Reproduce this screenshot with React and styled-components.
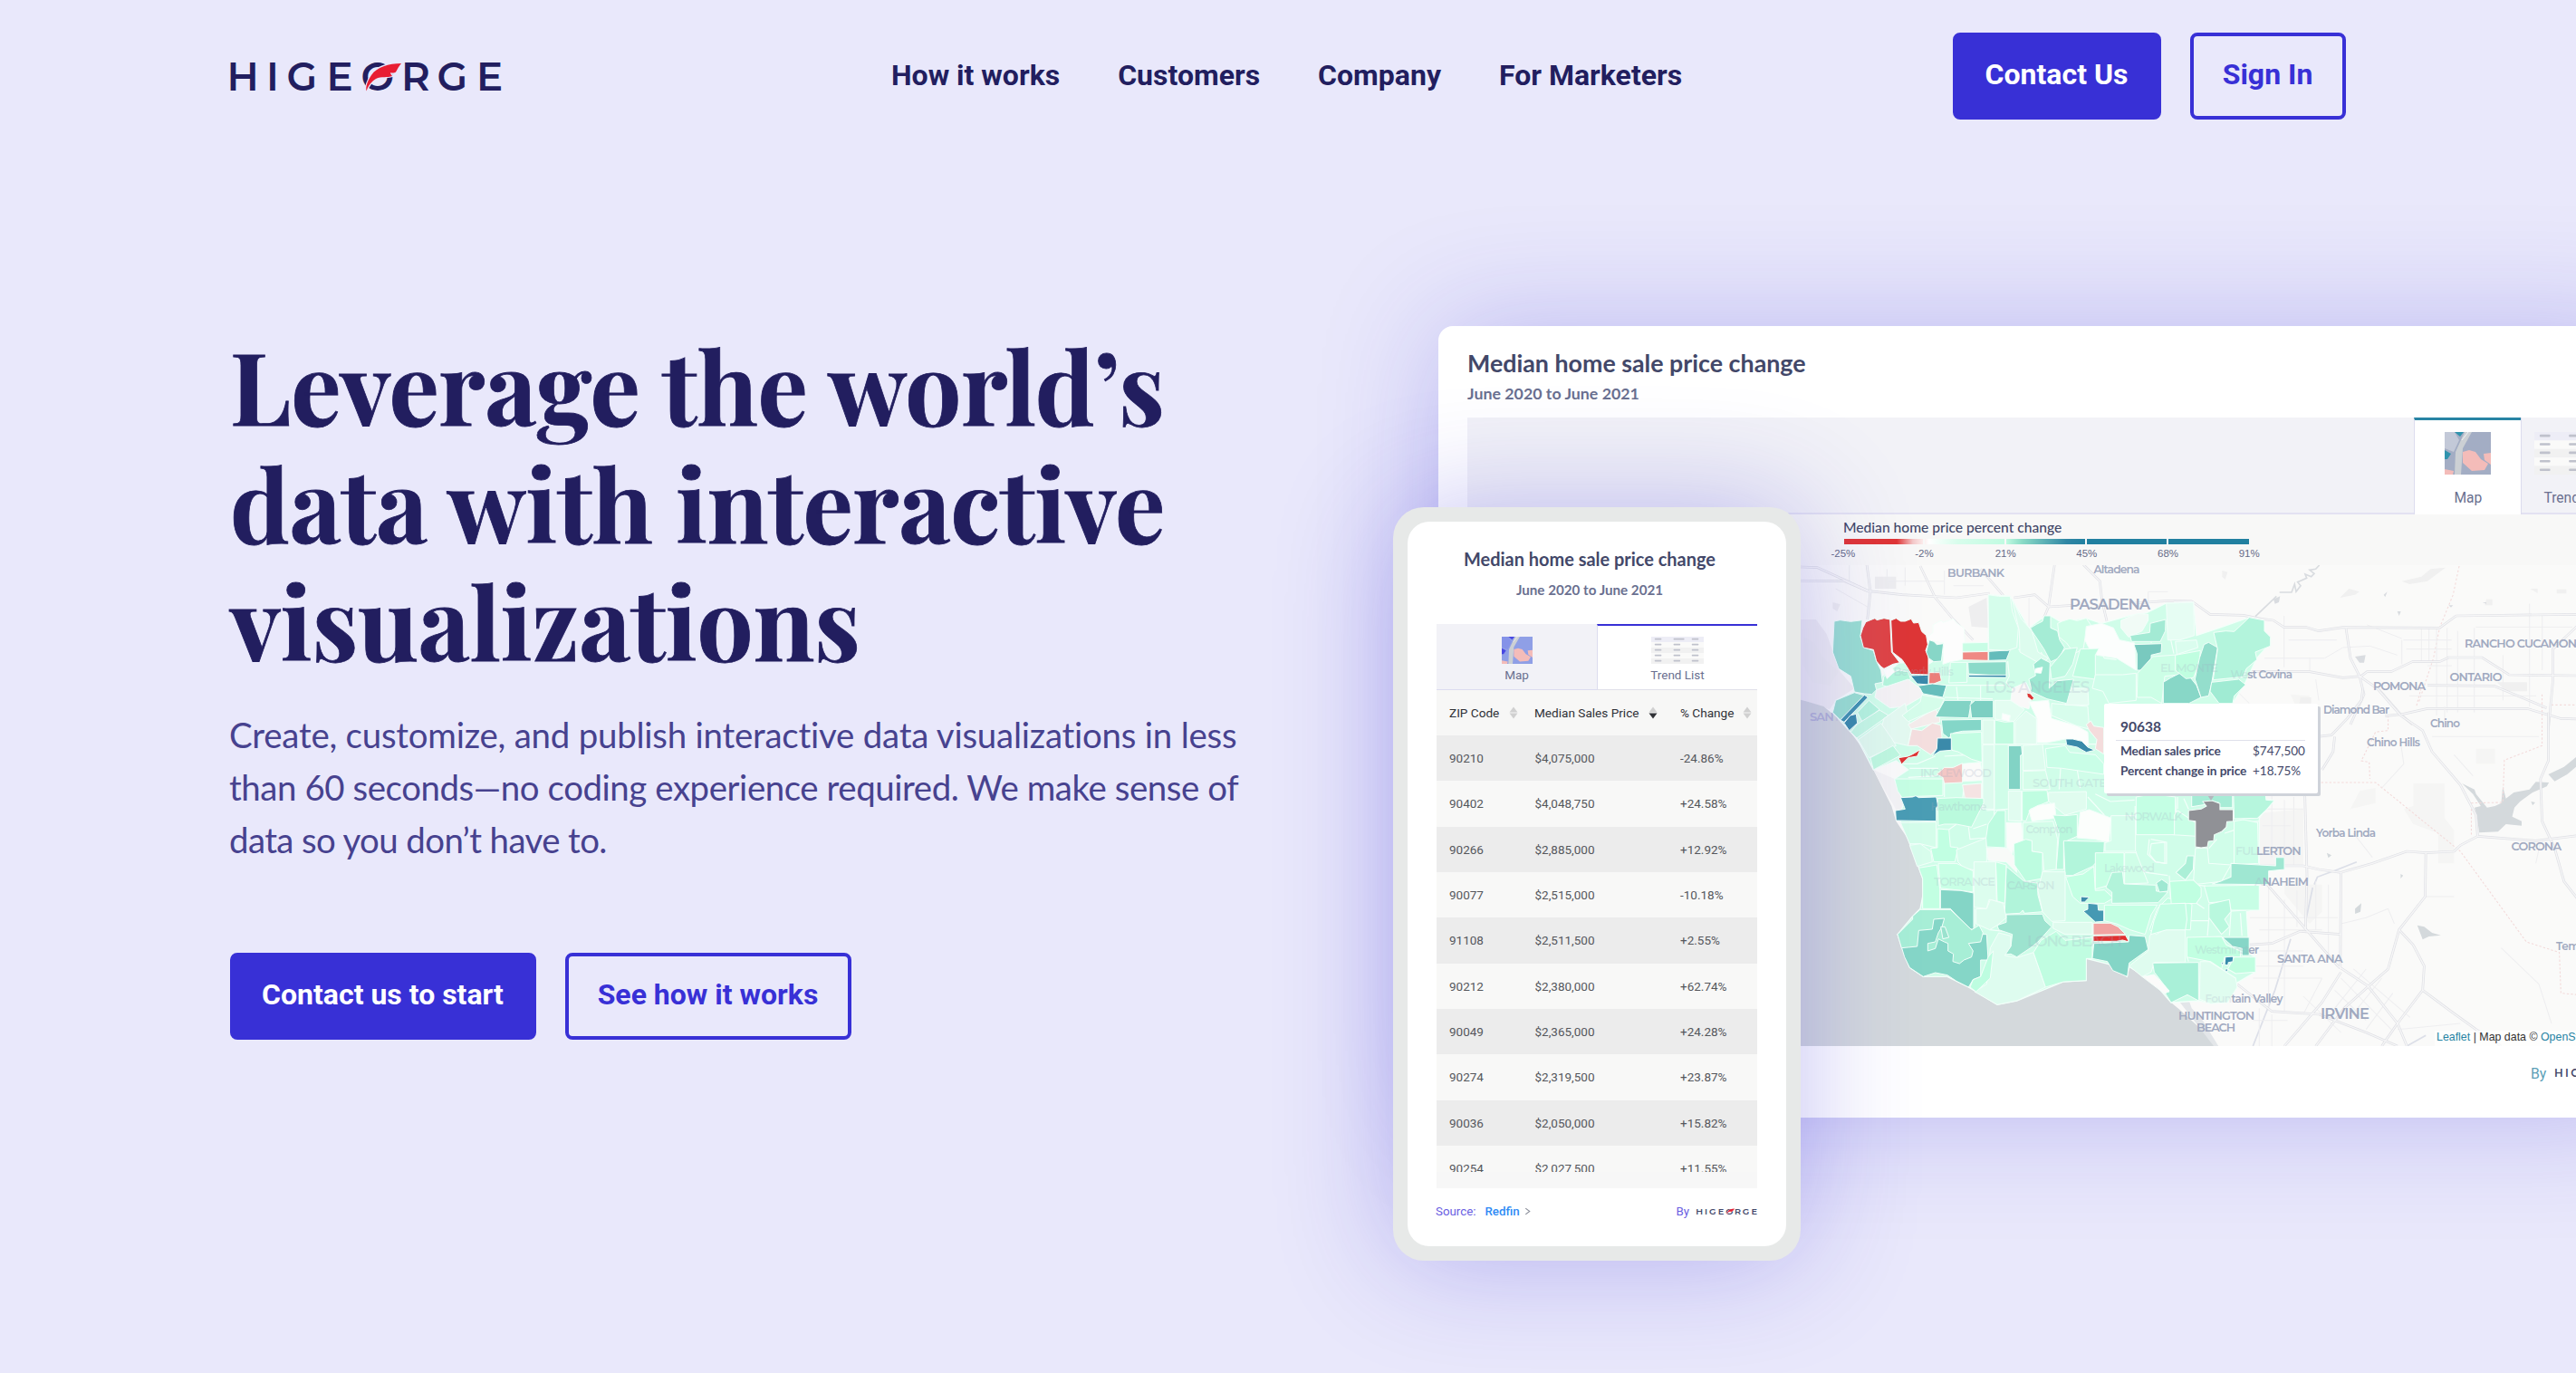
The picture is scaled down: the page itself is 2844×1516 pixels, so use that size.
import React from "react";
import styled, { createGlobalStyle, css } from "styled-components";

const GlobalStyle = createGlobalStyle`
  html, body { margin: 0; padding: 0; }
  body { background: #e9e8fb; overflow: hidden; }
  * { box-sizing: border-box; }
`;

const color = {
  navy: "#221e5f",
  indigo: "#3830d6",
  body: "#47428f",
  slate: "#434869",
  slateLight: "#6a7090",
  teal: "#2884a4",
};

const Page = styled.div`
  width: 100vw;
  height: 100vh;
  overflow: hidden;
  background: #e9e8fb;
  font-family: Roboto, "Liberation Sans", sans-serif;
`;

/* ---------- header ---------- */

const Header = styled.header`
  display: flex;
  align-items: center;
  height: 168px;
  padding: 0 254px;
`;

const Nav = styled.nav`
  display: flex;
  gap: 64px;
  margin: 0 0 2px 429px;
`;

const NavLink = styled.a`
  color: ${color.navy};
  font-size: 32px;
  font-weight: 700;
  line-height: 38px;
  white-space: nowrap;
`;

const ButtonRow = styled.div`
  display: flex;
  gap: 32px;
`;

const Actions = styled(ButtonRow)`
  margin-left: auto;
`;

const Button = styled.button`
  width: ${(p) => p.$width}px;
  height: 96px;
  padding: 0 1px 4px 0;
  border: 4px solid ${color.indigo};
  border-radius: 8px;
  background: ${(p) => (p.$solid ? color.indigo : "transparent")};
  color: ${(p) => (p.$solid ? "#fff" : color.indigo)};
  font-family: Roboto, "Liberation Sans", sans-serif;
  font-size: 32px;
  font-weight: 700;
  white-space: nowrap;
`;

/* ---------- hero ---------- */

const Hero = styled.main`
  display: flex;
  align-items: flex-start;
  padding-left: 254px;
`;

const Copy = styled.section`
  flex: 0 0 1334px;
  padding-top: 192px;
`;

const Title = styled.h1`
  margin: 0;
  color: ${color.navy};
  font-family: "Playfair Display", "Liberation Serif", serif;
  font-size: 110px;
  font-weight: 700;
  line-height: 130px;
  -webkit-text-stroke: 0.8px ${color.navy};
`;

const TitleLine = styled.span`
  display: block;
  white-space: nowrap;
  letter-spacing: ${(p) => p.$track}px;
`;

const Lead = styled.p`
  width: 1130px;
  margin: 32px 0 96px -1px;
  color: ${color.body};
  font-family: Lato, sans-serif;
  font-size: 38.4px;
  font-variant-ligatures: none;
  line-height: 58px;
`;

const LeadLine = styled.span`
  display: block;
  letter-spacing: ${(p) => p.$track}px;
  white-space: nowrap;
`;

const Showcase = styled.section`
  position: relative;
  flex: 0 0 1344px;
  margin-top: 192px;
`;

const glow = css`
  box-shadow: 0 0 128px rgba(57, 48, 216, ${(p) => p.$glow});
`;

/* ---------- desktop card ---------- */

const Card = styled.article`
  ${glow}
  height: 874px;
  padding: 0 32px;
  border-radius: 16px;
  background: #fff;
`;

const CardHead = styled.header`
  height: 101px;
  padding-top: 24px;
  font-family: Lato, sans-serif;
  font-weight: 700;
`;

const CardTitle = styled.h2`
  margin: 0;
  color: ${color.slate};
  font-size: 26.8px;
  line-height: 34px;
`;

const CardSubtitle = styled.p`
  margin: 2px 0 0;
  color: ${color.slateLight};
  font-size: 17.8px;
  line-height: 28px;
`;

const TabBar = styled.div`
  display: flex;
  justify-content: flex-end;
  height: 107px;
  padding-right: 3px;
  border-bottom: 2px solid #e3e2f2;
  background: #f2f2f7;
`;

const Tab = styled.div`
  display: flex;
  flex-direction: column;
  align-items: center;
  gap: 16px;
  width: 118px;
  height: 107px;
  padding-top: ${(p) => (p.$active ? 13 : 16)}px;
  border-top: ${(p) => (p.$active ? `3px solid ${color.teal}` : "0")};
  border-left: 1px solid #dcdcee;
  background: ${(p) => (p.$active ? "#fff" : "transparent")};
  color: ${color.slateLight};
  font-size: 15.6px;
  line-height: 20px;
`;

const Legend = styled.div`
  height: 56px;
  padding: 4px 0 0 415px;
  background: #f8f8f7;
`;

const LegendTitle = styled.div`
  color: ${color.slate};
  font-family: Lato, sans-serif;
  font-size: 15.6px;
  font-weight: 500;
  line-height: 20px;
`;

const LegendBar = styled.div`
  display: grid;
  grid-template-columns: repeat(5, 1fr);
  width: 447px;
  height: 6px;
  margin: 3px 0 0 1px;
  background: linear-gradient(90deg, #e03535 0 13%, #f4c9c9 17%, #fff 21%, #d8fdec 28%, #c0fbe1 40%, #8adbc6 44%, #2f86a4 55%, #2180a0 60%);
`;

const LegendStep = styled.i`
  border-right: ${(p) => (p.$last ? 0 : 2)}px solid #f8f8f7;
`;

const LegendScale = styled.div`
  display: flex;
  width: 538px;
  margin: 4px 0 0 -45px;
`;

const LegendMark = styled.span`
  flex: 1;
  color: #666b87;
  font-family: "Liberation Sans", sans-serif;
  font-size: 11.5px;
  line-height: 13px;
  text-align: center;
`;

const MapFrame = styled.div`
  position: relative;
  height: 531px;
  svg { display: block; }
`;

const Tooltip = styled.div`
  position: absolute;
  left: 703px;
  top: 153px;
  width: 236px;
  height: 99px;
  padding: 15px 14px 0 13px;
  border-radius: 2px;
  background: #fff;
  box-shadow: 3px 3px 0 #cfd3da;
  color: ${color.slate};
  font-family: Lato, sans-serif;
`;

const TooltipTitle = styled.div`
  height: 26px;
  padding-left: 5px;
  border-bottom: 1px solid #dfe0ea;
  font-size: 15.5px;
  font-weight: 700;
  line-height: 20px;
`;

const TooltipRow = styled.div`
  display: grid;
  grid-template-columns: 146px 1fr;
  padding-left: 5px;
  font-size: 13.5px;
  line-height: 22px;
  white-space: nowrap;
`;

const TooltipKey = styled.span`
  font-weight: 700;
  font-size: 13.7px;
  letter-spacing: -0.1px;
`;

const Attribution = styled.div`
  position: absolute;
  left: 1068px;
  bottom: 0;
  padding: 0 2px 2px;
  background: rgba(255, 255, 255, 0.7);
  color: #333;
  font-family: "Liberation Sans", sans-serif;
  font-size: 12.4px;
  line-height: 15px;
  white-space: nowrap;
`;

const MapLink = styled.a`
  color: ${color.teal};
`;

const CardFoot = styled.footer`
  display: flex;
  align-items: center;
  gap: 10px;
  height: 58px;
  padding: 2px 0 0 1174px;
  color: #5c9fb8;
  font-size: 15.8px;
`;

/* ---------- phone ---------- */

const Phone = styled.article`
  ${glow}
  position: absolute;
  left: -50px;
  top: 200px;
  width: 450px;
  height: 832px;
  padding: 16px;
  border-radius: 34px;
  background: #e7e9e8;
`;

const Screen = styled.div`
  height: 800px;
  padding: 27px 32px 0;
  border-radius: 24px;
  background: #fff;
  font-family: Roboto, sans-serif;
`;

const PhoneTitle = styled.h3`
  margin: 0 16px 0 0;
  color: ${color.slate};
  font-family: Lato, sans-serif;
  font-size: 19.95px;
  line-height: 28px;
  text-align: center;
  white-space: nowrap;
`;

const PhoneSubtitle = styled.p`
  margin: 8px 16px 26px 0;
  color: ${color.slateLight};
  font-family: Lato, sans-serif;
  font-size: 15.2px;
  font-weight: 700;
  line-height: 24px;
  text-align: center;
`;

const PhoneTabs = styled.div`
  display: grid;
  grid-template-columns: 1fr 1fr;
  height: 73px;
`;

const PhoneTab = styled.div`
  display: flex;
  flex-direction: column;
  align-items: center;
  gap: 3px;
  padding-top: ${(p) => (p.$active ? 12 : 14)}px;
  border-top: ${(p) => (p.$active ? `2px solid ${color.indigo}` : "0")};
  border-bottom: 1px solid ${(p) => (p.$active ? "#e0e0ea" : "#dcdcf0")};
  border-left: ${(p) => (p.$active ? "1px solid #dcdcee" : "0")};
  background: ${(p) => (p.$active ? "#fff" : "#f2f2f7")};
  color: ${color.slateLight};
  font-size: 13.5px;
  line-height: 18px;
`;

const Table = styled.div`
  height: 550px;
  background: #f7f7f7;
`;

const TableHead = styled.div`
  display: grid;
  grid-template-columns: 94px 161px 1fr;
  align-items: center;
  height: 50px;
  padding-left: 14px;
  background: #f7f7f6;
  color: #2f3136;
  font-size: 13.6px;
  white-space: nowrap;
`;

const HeadCell = styled.span`
  display: flex;
  align-items: center;
  justify-content: space-between;
  padding-right: ${(p) => p.$pad}px;
`;

const Rows = styled.div`
  height: 482px;
  overflow: hidden;
`;

const Row = styled.div`
  display: grid;
  grid-template-columns: 94.5px 160.5px 1fr;
  height: 50.35px;
  padding-left: 14px;
  background: ${(p) => (p.$shade ? "#ececec" : "#f8f8f7")};
  color: #55575c;
  font-size: 13.5px;
  line-height: 50px;
`;

const PhoneFoot = styled.footer`
  display: flex;
  align-items: center;
  height: 51px;
  margin-left: -1px;
  color: #6a60e2;
  font-size: 13.3px;
`;

const SourceLink = styled.a`
  margin: 0 5px 0 10px;
  color: #2f8bf5;
  font-weight: 500;
`;

const Byline = styled.span`
  display: flex;
  align-items: center;
  gap: 8px;
  margin-left: auto;
`;

/* ---------- drawings ---------- */

const Mark = styled.svg`
  flex: none;
  overflow: visible;
`;

const Wordmark = styled.text`
  font-family: Montserrat, Lato, sans-serif;
  font-size: 43.5px;
  font-weight: 600;
`;

function Logo({ width, height, back = "#e9e8fb", ink = color.navy }) {
  return (
    <Mark width={width} height={height} viewBox="253 66 301 35" preserveAspectRatio="none">
      <Wordmark x="249.500 293 315.500 359.500 397.500 442 481.500 525" y="98.6" fill={ink}>
        HIGEORGE
      </Wordmark>
      <path
        d="M442 69 C428 69 415 73 409 82 C405 88 402.500 94 403.500 99.500 C406 93 409 89 414 86 C420 83 427 85 432 83 C431 81.500 430 80.500 430 79.200 C432 79.800 434.500 79.800 436 78.500 C438 75 439.500 72 442 69Z"
        fill="#e81e33"
        stroke={back}
        strokeWidth="2.400"
        paintOrder="stroke"
      />
    </Mark>
  );
}

function MapThumb({ width, height, blue }) {
  const field = blue ? "#8f9fe6" : "#a3adc4";
  const accent = blue ? "#4747e2" : "#2f93ad";
  return (
    <svg width={width} height={height} viewBox="0 0 51 47" preserveAspectRatio="none">
      <rect width="51" height="47" fill={field} />
      <path d="M0 0H11L16 9 10 22 0 18Z" fill={blue ? "#8492e8" : "#c3c9d8"} />
      <path d="M11 0H21L17 5Z M0 20L7 24 3 30 0 30Z" fill={accent} />
      <path d="M22 0H30L20 18 18 47H11L12 22Z" fill="#ccd0d4" />
      <path d="M26 0L19 9" stroke="#f2f2f2" />
      <path d="M20 22L27 20 34 22 40 30 48 35 44 42 30 43 20 34Z M43 24L51 23V36L44 31Z M0 41L10 43 9 47H0Z" fill="#f4bcb9" />
    </svg>
  );
}

function ListThumb({ width, height }) {
  const rows = [0, 1, 2, 3, 4];
  return (
    <svg width={width} height={height} viewBox="0 0 92 47" preserveAspectRatio="none">
      {rows.map((r) => (
        <g key={r}>
          <rect y={r * 9.4} width="92" height="9.400" fill={r === 0 ? "#ededf6" : r % 2 ? "#fafaf9" : "#f1f1f1"} />
          {[6, 39, 71].map((x) => (
            <rect key={x} x={x} y={r * 9.4 + 2.8} width={r === 0 && x === 39 ? 19 : 12} height="2.600" rx="1" fill="#bfc1cc" />
          ))}
        </g>
      ))}
    </svg>
  );
}

function SortIcon({ active }) {
  return (
    <svg width="10" height="14" viewBox="0 0 10 14">
      <path d="M5 0.500L9.500 6.500H0.500Z" fill="#d0d0d0" />
      <path d="M5 13.500L0.500 7.500H9.500Z" fill={active ? "#303236" : "#d0d0d0"} />
    </svg>
  );
}

const REGION =
  "M360,555 L410,515 507,520 620,450 705,448 708,290 778,295 840,400 880,370 912,360 945,380 1030,368 1080,385 1170,360 1230,350 1295,318 1385,315 1395,425 1470,400 1570,365 1640,450 1595,500 1555,585 1515,650 1540,960 1644,970 1603,1030 1603,1330 1561,1340 1570,1480 1590,1490 1590,1540 1530,1575 1499,1640 1441,1645 1405,1635 1311,1641 1250,1570 1172,1522 1165,1555 1110,1515 1030,1495 1030,1568 955,1572 800,1635 735,1648 640,1590 570,1555 490,1555 445,1525 420,1460 405,1415 455,1355 480,1330 490,1280 488,1230 470,1180 440,1100 410,1030 425,980 395,900 440,870 400,840 325,870 270,765 245,740 190,680 200,640 260,612Z";

const NORTH = [
  ["#9be0d1", "195,378 215,374 250,379 288,374 282,430 295,465 325,475 335,510 350,540 355,580 330,585 335,605 320,620 295,618 262,612 250,560 210,535 190,480"],
  ["#fdfdfd", "505,430 522,415 522,390 550,375 555,382 590,370 600,384 625,400 628,445 618,505 580,512 555,520 558,450 505,440"],
  ["#e04545", "300,380 330,368 336,374 360,368 380,372 385,480 412,515 390,520 360,535 350,528 335,510 325,472 292,465 282,425 290,400"],
  ["#de3636", "383,375 400,368 415,378 430,378 450,370 458,384 475,382 485,412 500,425 505,455 498,475 507,490 507,555 450,553 437,530 420,505 388,480"],
  ["#87d6c7", "510,440 525,445 535,455 557,452 550,510 525,512 508,500 500,480"],
  ["#c8fde5", "620,450 705,448 705,478 620,478"],
  ["#ef8984", "620,480 705,478 705,508 620,506"],
  ["#64bcbb", "707,478 778,473 765,506 707,508"],
  ["#8bdac9", "638,514 765,512 765,560 640,552"],
  ["#2f84a6", "640,556 765,556 765,564 640,563"],
  ["#c9fde6", "580,514 635,514 635,580 575,582"],
  ["#d5fdeb", "705,290 740,295 778,295 785,345 805,400 800,465 770,475 707,472"],
  ["#ddfcee", "783,300 815,370 850,410 870,480 905,500 880,520 810,480 808,410"],
  ["#a5ecd5", "845,400 865,388 885,378 890,360 912,360 912,400 935,410 942,440 958,465 940,500 912,512 890,470 850,410"],
  ["#d0fee8", "935,385 950,378 975,370 1000,376 1030,368 1048,395 1025,440 1020,470 990,485 965,450 940,430"],
  ["#fcfefd", "1030,395 1080,385 1120,400 1140,440 1190,450 1195,540 1130,500 1065,490 1040,468 1025,440"],
  ["#f1fbf6", "1145,375 1200,352 1235,355 1235,375 1215,410 1170,430 1145,400"],
  ["#c0fce1", "1010,470 1072,468 1060,490 1060,570 985,560"],
  ["#bdf8e0", "960,470 1000,465 985,520 960,560 915,570 910,530 935,500"],
  ["#a3ead4", "1175,425 1240,415 1242,385 1293,372 1292,410 1275,445 1180,445"],
  ["#79c9bf", "1188,455 1280,452 1278,482 1245,490 1245,540 1198,540 1198,485"],
  ["#e6fdf3", "1295,318 1385,315 1388,425 1340,440 1300,440"],
  ["#ccfee6", "1200,550 1250,495 1385,485 1385,550 1290,560 1280,650 1245,630 1198,630"],
  ["#d0fdea", "1060,555 1150,555 1195,550 1195,640 1105,650 1085,610 1050,600"],
  ["#b5f7dc", "360,560 410,540 440,545 448,568 405,605 355,590"],
  ["#fdfdfd", "358,540 385,530 395,545 370,568"],
  ["#3a89aa", "448,558 507,556 507,588 470,585"],
  ["#ec7f7b", "510,548 545,548 550,575 525,585 508,585"],
  ["#66bebc", "472,592 520,585 567,590 555,630 490,618"],
  ["#f5f3f4", "335,605 440,570 480,600 490,625 430,660 380,665 330,630"],
  ["#9be0d0", "195,660 200,640 262,614 300,625 215,705 190,680"],
  ["#4394b0", "215,705 295,622 307,630 228,712"],
  ["#3c8cab", "228,715 248,690 268,685 272,715 245,740"],
  ["#b5f4dd", "272,680 310,640 345,670 290,715"],
  ["#c5f8e3", "250,745 270,720 345,672 375,690 270,765"],
  ["#e4faf0", "350,735 360,700 430,650 445,715 450,735 440,790 395,780"],
  ["#dff9ed", "275,770 350,715 385,765 400,790 310,830"],
  ["#bff8df", "315,830 390,790 415,822 325,870"],
  ["#f4eceb", "440,720 500,685 530,665 545,700 545,712 450,735"],
  ["#d5fdea", "420,690 480,645 485,622 560,635 545,665 440,710"],
  ["#f4dede", "440,790 452,735 485,740 520,715 548,722 552,760 535,800 515,820 470,790"],
  ["#82d3c5", "530,695 560,640 650,640 640,698"],
  ["#7ccfc2", "645,655 662,640 722,640 722,698 650,698"],
  ["#84d6c8", "550,705 683,703 683,740 620,742 590,748 575,765 555,750"],
  ["#c3fde3", "580,750 683,745 685,845 650,835 605,810 585,805"],
  ["#3b8aaa", "537,765 583,765 583,805 545,808 520,824 535,800"],
  ["#de3535", "408,830 440,825 455,818 480,803 470,825 440,830 418,852"],
  ["#f3c7c5", "535,885 560,862 590,862 620,848 620,912 560,915 555,895"],
  ["#fbfbfa", "622,850 680,845 685,905 622,908"],
  ["#f5e3e3", "620,920 683,915 683,970 630,975"],
  ["#dffbee", "687,705 725,705 725,785 687,785"],
  ["#c0fbe0", "727,705 760,712 790,710 790,785 727,785"],
  ["#e3fdf1", "727,640 780,640 825,670 790,710 727,702"],
  ["#fdfdfd", "752,683 778,690 775,710 750,703"],
  ["#e1fcf0", "795,710 830,675 865,700 865,785 795,785"],
  ["#f9f8f8", "780,640 785,600 830,580 850,620 840,668 810,660"],
  ["#fdfefd", "840,645 905,640 915,700 1000,725 1035,745 1038,790 960,768 900,780 867,780 867,700"],
  ["#d7fdec", "915,650 1035,660 1040,735 1000,725 915,690"],
  ["#e5fcf2", "965,600 1035,600 1038,655 960,655"],
  ["#9ce7d1", "855,520 880,500 910,515 907,600 935,575 988,570 965,650 900,635 845,610 848,600 840,570 862,558"],
  ["#fdfefd", "862,535 885,530 880,550 860,548"],
  ["#dc3434", "833,615 845,618 857,632 850,640 835,628"],
  ["#82d3c5", "772,790 815,790 818,820 812,822 812,935 772,935"],
  ["#ddfbee", "687,787 725,787 725,1000 687,1000"],
  ["#ddfcee", "820,790 885,785 895,870 820,872"],
  ["#d5fdea", "820,875 895,872 910,935 820,935"],
  ["#c9fee7", "895,800 960,790 975,812 1060,820 1088,850 1088,885 950,865 900,862"],
  ["#f4dcdc", "1030,720 1045,708 1055,725 1088,730 1088,818 1060,800 1065,770 1040,740"],
  ["#3a8aaa", "962,768 985,768 1015,775 1035,795 1058,805 1030,812 1000,795 965,788"],
  ["#88d7c7", "1285,580 1310,565 1340,550 1365,552 1395,590 1410,630 1370,650 1285,650"],
];

const SOUTH = [
  ["#c6ffe3", "395,0 555,0 555,55 470,58 420,62 405,40"],
  ["#4a9db4", "415,62 455,60 465,56 475,62 533,60 540,90 533,95 533,140 400,138 398,105 430,100"],
  ["#bafadd", "537,65 600,62 690,65 690,80 650,160 600,150 560,150 540,155"],
  ["#d4fdea", "415,145 533,143 533,228 480,215 445,215"],
  ["#c1ffe2", "515,230 537,228 537,165 575,168 580,225 605,228 595,275 525,275"],
  ["#d8fdec", "445,220 480,215 515,240 520,275 470,290"],
  ["#d7fdec", "600,235 700,195 700,275 658,302 625,295 605,275"],
  ["#bdfbe0", "698,195 705,150 735,105 762,105 762,228 700,225"],
  ["#fbfcfb", "765,145 815,145 820,205 790,215 785,250 768,250"],
  ["#f8faf8", "700,230 770,230 795,265 800,310 765,275 705,270"],
  ["#e1fcf0", "772,40 815,40 815,140 772,138"],
  ["#c0fde1", "818,40 900,38 905,75 845,100 830,140 818,138"],
  ["#e0fcef", "905,45 1030,42 1030,100 960,120 905,75"],
  ["#fcfefc", "840,105 870,88 925,80 930,130 850,140"],
  ["#b9f8dd", "920,120 960,122 1000,118 1000,190 955,210 955,300 930,300 940,180"],
  ["#d3fde9", "820,145 920,140 935,200 930,300 890,305 885,245 850,240 850,205 820,205"],
  ["#fcfefc", "1010,110 1040,102 1112,130 1105,210 1060,200 1000,195"],
  ["#d6fdec", "1112,122 1193,122 1193,240 1092,240 1092,212 1112,205"],
  ["#c4ffe4", "1195,60 1250,50 1325,60 1325,185 1195,185"],
  ["#bdfce0", "790,215 830,200 850,205 850,240 885,245 885,330 830,340 792,285"],
  ["#b2f5db", "955,205 1090,208 1088,250 1050,290 985,320 960,320"],
  ["#b1f4da", "765,290 825,340 868,345 870,385 885,440 825,445 820,435 810,445 760,448"],
  ["#c2ffe2", "730,275 765,285 760,412 735,405"],
  ["#dcfdee", "658,275 730,275 733,405 708,400 700,430 658,425"],
  ["#c8ffe5", "540,280 600,280 655,305 655,375 547,362"],
  ["#84d5c6", "547,367 615,370 657,378 657,500 640,495 580,430 547,430"],
  ["#c2ffe2", "475,295 535,285 545,365 545,430 488,430 488,330"],
  ["#85d6c7", "405,515 425,495 455,465 455,455 480,433 580,433 650,500 685,515 700,515 705,600 680,600 680,655 655,665 640,690 600,670 570,650 530,642 490,655 445,625 428,590"],
  ["#a7eed6", "405,515 425,495 455,465 455,455 480,433 580,433 650,500 675,485 688,510 680,540 640,545 655,570 650,590 625,600 610,612 588,605 590,580 572,570 572,545 560,540 540,530 530,562 505,570 505,545 530,540 540,510 552,490 560,462 525,465 520,498 475,502 470,555 418,560"],
  ["#9ae2ce", "548,490 562,490 575,525 555,530"],
  ["#9de3cf", "735,485 765,475 765,450 885,448 893,470 915,490 870,540 845,560 800,590 780,580 755,582 780,555 785,515 740,500"],
  ["#defcef", "712,560 740,510 780,520 780,555 760,585 800,592 855,575 895,690 800,735 735,748 660,705 700,680"],
  ["#bdfde0", "705,590 722,570 712,660 665,705 645,690 655,665 680,655"],
  ["#ddfcee", "665,430 700,430 712,400 755,412 765,460 735,485 710,500 665,480"],
  ["#dcfbed", "885,308 960,308 960,470 915,472 885,440 870,370"],
  ["#c0fde1", "855,575 880,535 930,505 960,535 1050,525 1050,595 1030,595 1030,668 955,672 895,690"],
  ["#dffbee", "920,475 1050,475 1050,515 960,515 920,495"],
  ["#c3ffe3", "962,325 1020,315 1055,290 1060,370 1090,368 1120,395 1090,412 1010,412 985,390"],
  ["#c6ffe4", "1060,245 1155,245 1155,345 1095,355 1060,365"],
  ["#d0fee8", "1157,245 1195,245 1235,345 1157,348"],
  ["#b2f3da", "1115,310 1150,308 1155,348 1260,352 1262,372 1300,375 1268,410 1115,412 1115,375 1095,360"],
  ["#9fe8d2", "1262,345 1280,333 1302,348 1300,372 1272,375"],
  ["#c3ffe3", "1090,418 1265,418 1245,450 1225,515 1175,500 1130,480 1090,470"],
  ["#3c8cab", "1012,390 1040,392 1025,408 1012,408"],
  ["#4599b3", "1020,438 1035,432 1035,412 1068,415 1070,435 1088,435 1088,472 1060,474"],
  ["#f1a3a1", "1053,478 1110,478 1135,490 1160,515 1053,517"],
  ["#e03030", "1053,520 1160,518 1172,540 1150,534 1130,538 1053,538"],
  ["#84d5c6", "1055,545 1170,540 1172,518 1225,522 1235,565 1172,610 1166,655 1118,635 1100,605 1050,595"],
  ["#dffcef", "1240,520 1260,495 1358,500 1358,608 1255,608 1245,640 1215,655 1172,620 1235,570"],
  ["#c2fde2", "1265,430 1300,395 1380,415 1375,500 1290,498 1262,515 1240,500"],
  ["#a9f0d8", "1250,610 1402,608 1402,735 1365,715 1311,741 1290,708 1305,705 1255,640"],
  ["#fbfbfa", "1215,655 1255,648 1305,702 1290,712"],
];

const NORTHEAST = [
  ["#c0fee0", "5,1150 88,1135 85,1175 65,1225 40,1228 5,1200"],
  ["#dafdee", "5,1105 75,1100 80,1125 10,1148"],
  ["#94decc", "85,1160 100,1115 115,1108 145,1125 125,1245 115,1285 90,1290 70,1230"],
  ["#b3f4dc", "132,1075 172,1070 200,1072 250,1025 300,1035 300,1070 320,1090 320,1120 270,1140 275,1165 240,1195 230,1222 130,1232 145,1130"],
  ["#a0ebd3", "125,1240 215,1230 238,1248 200,1285 195,1310 150,1310 120,1270"],
];

const SOUTHEAST = [
  ["#a6ecd6", "345,350 475,350 475,395 435,395 430,378 345,392"],
  ["#b6f6dd", "478,350 580,350 582,370 608,372 585,400 555,430 480,432"],
  ["#ccfee8", "480,440 510,435 555,445 558,580 480,585"],
  ["#c9fee6", "300,405 357,445 357,490 290,485 290,420"],
  ["#d3fdea", "357,530 395,528 400,580 470,585 440,640 350,650"],
  ["#abefd7", "295,610 325,580 330,555 352,555 350,600 325,635"],
  ["#9fe7d2", "470,580 612,588 612,560 640,560 640,600 590,605 590,650 410,648 440,638 470,625"],
  ["#c7fee5", "385,655 560,652 560,735 470,735 465,705 400,710"],
  ["#b9f8de", "400,715 465,700 470,740 450,765 465,790 440,815 400,760"],
  ["#c0ffe1", "275,640 350,635 375,660 375,690 360,712 280,715"],
  ["#c4fde4", "225,770 245,715 325,712 330,765 325,800 265,800 215,815"],
  ["#c1ffe1", "330,825 440,822 455,850 500,870 500,890 450,890 440,930 405,905 330,890"],
  ["#dffcef", "372,905 400,905 440,930 485,960 490,990 460,1040 405,1045 370,1030"],
  ["#c0fee0", "480,890 548,890 548,940 485,945 460,930"],
  ["#86d6c7", "443,825 528,825 528,885 505,885 505,862 475,855"],
  ["#378bab", "452,890 478,888 476,905 462,908 460,918 450,915"],
  ["#378bab", "440,908 446,908 446,914 440,914"],
  ["#378bab", "452,930 460,930 460,937 452,937"],
  ["#909196", "380,375 410,372 435,382 435,402 477,402 477,440 457,442 455,460 440,475 417,485 415,505 398,507 395,525 375,528 357,525 357,440 335,437 335,405 375,400 392,390"],
];

const BORDERS = {
  northwest:
    "M770,510 L775,560 765,580 780,600 M805,470 L850,500 M800,790 H770 M725,785 H1088 M725,785 V1040 M685,830 V1000 M560,825 L640,820 M415,850 L470,850 530,825 M445,865 H540 M440,895 L535,890 M560,590 H760 M560,630 L720,635 M600,595 L605,640 M680,590 V640 M905,600 L960,605 M1150,555 L1145,600 1150,645 M1072,468 L1090,500 1130,505 M1060,820 L1075,880 M945,865 L940,935 M895,935 L900,980 M1000,870 L1010,930 M975,812 L980,860 M880,480 L890,500 M1245,430 L1245,450 M1310,440 L1320,485",
  southwest:
    "M560,0 L560,60 M620,70 L625,20 M690,65 V10 M725,40 V100 M700,105 L770,100 M640,160 L645,200 700,195 M575,168 L600,150 M655,165 L700,150 M1195,240 L1200,290 1230,310 1300,320 M1245,215 L1240,250 1260,275 1290,280 1290,210 1245,215 M1325,60 L1330,160 1360,165 M1155,290 L1195,290 M1035,60 L1090,120 M1060,50 L1110,75 1190,70 M1305,320 L1310,410 M660,430 L660,490 M710,500 L760,505 M1030,235 L1000,240 M885,440 L960,440 M905,320 L905,440 M780,350 L780,440",
  southeast:
    "M190,400 L240,480 290,485 M210,500 L205,550 230,575 265,580 265,510 215,500 M165,390 L165,480 M300,360 V400 M320,365 L335,400 M395,530 L385,600 M480,470 L450,480 M425,500 L400,530 M560,440 L520,445 M350,650 L390,655 M500,655 L505,735 M430,660 L425,705 M440,740 L520,735 M470,740 L465,820 M400,760 L395,820 M330,770 L400,770 M500,745 L505,820 M360,712 L385,730 M330,890 L335,905 M280,715 L240,720 M440,765 L435,800 450,805 M375,690 L350,695",
};

const ROADS = {
  north: [
    "M0,195 L140,200 310,278 420,290 600,300 710,285",
    "M0,243 L230,245 310,280",
    "M303,190 L315,280 305,372",
    "M480,195 L530,300 590,372 655,440",
    "M680,205 L755,292",
    "M925,190 L905,330 890,365",
    "M790,300 L860,290 905,330 985,325",
    "M1020,190 L1075,245 1082,310 1100,385",
    "M1190,318 L1300,310 1380,312",
  ],
  northeast: [
    "M0,972 L60,972 120,1015 230,1018 290,1030 330,1035 365,1058 440,1058 480,1070 560,1058 880,1060 935,1020 1340,1015",
    "M570,1060 L585,1160 615,1220 630,1280 585,1380",
    "M240,1205 L450,1205 560,1225 620,1220 640,1205 720,1205 790,1172 880,1172 910,1158 1020,1158 1110,1215 1340,1218",
    "M615,1220 L680,1265 750,1345 790,1380",
    "M700,1352 L760,1345 840,1327 1170,1327 1280,1360 1340,1362",
    "M1340,1050 L1255,1130 1255,1240 1240,1400",
    "M840,1250 L1060,1252 1235,1325",
  ],
  southeast: [
    "M890,0 L885,40 840,100 790,155 745,160",
    "M800,160 L795,210 760,270",
    "M935,0 L1010,90 1080,140 1110,210 1200,320 1250,420 1255,490 1200,520 1180,540 1090,545 1030,540 920,580 820,610 750,600 700,588 560,588",
    "M1480,80 L1480,240 1455,300 1460,440 1500,530 1530,640 1575,700",
    "M1255,490 L1440,505 1575,488",
    "M1090,545 L1088,690 1005,800 970,930 910,985 830,1060 740,1185",
    "M1005,800 L1050,850 1085,920 1080,1000 1000,1110 950,1185",
    "M1080,1000 L1170,1070 1250,1130 1330,1185",
    "M820,610 L818,930",
    "M560,620 L710,800 810,920 905,985 1000,1110 1030,1185",
    "M520,850 L600,845 690,805 820,815",
    "M707,800 L712,620 705,350",
    "M490,980 L600,1070 750,1080 900,1140 1000,1185",
    "M640,1185 L760,1040 820,940",
  ],
};

const STREETS = {
  north: [
    "M245,190 V250 M370,205 V265 M430,200 V260 M370,245 H560 M200,270 L305,330 M560,210 V290 M590,260 H690 M840,300 V400 M1235,280 V318 M1235,280 H1300",
  ],
  northeast: [
    "M365,1020 V1190 M300,1160 H500 L560,1125 650,1120 740,1150 M380,1100 H540 M755,1100 V1180 M820,1060 V1170 M845,1060 V1170 M870,1060 V1350 M905,1060 V1340 M940,1070 V1340 M995,1060 V1340 M1178,980 V1320 M1090,1150 V1300 M760,1100 H920 M770,1130 H920 M840,1185 H920 M640,1050 L755,1095 M1220,1020 V1200 M1000,1057 H1320 M780,1285 H1200 M450,1160 V1200 M200,1260 L250,1310 M470,1230 L480,1300",
  ],
  southeast: [
    "M560,400 H700 M570,455 H660 M600,330 V560 M640,370 V600 M670,360 V590 M530,760 H810 M560,870 H700 M560,800 H760 M590,660 V1060 M640,700 V1070 M680,670 V790 M740,640 V800 M780,650 V900 M540,920 H700 M540,960 H760 M540,1100 H650 M560,1060 V1185 M600,1080 V1185 M820,960 L980,1130 M860,930 L1040,1090 M800,1000 L900,1100 M700,1020 L820,1140 M760,960 L700,1080 M900,930 L800,1060 M950,960 L850,1090 M985,1010 L900,1130 M820,780 L900,760 970,730 990,780 M1180,220 L1240,290 M1010,180 L1020,250 950,330 M860,480 L920,560 M1090,690 H1180 M1440,580 L1455,510 M1000,1130 L1200,1110 M1110,160 H1450 M1150,60 V110 M1330,860 L1450,980 1490,1110",
  ],
};

const LABELS = [
  // [west edge, baseline, width, size, visible text, veiled prefix]
  [2150, 637, 63, 12.6, "BURBANK"],
  [2311.5, 633, 51, 12.3, "Altadena"],
  [2285, 673, 89, 16.4, "PASADENA"],
  [2721, 715, 142, 12.8, "RANCHO CUCAMONGA"],
  [2704.5, 752, 58, 12.8, "ONTARIO"],
  [2620, 762, 58, 12.8, "POMONA"],
  [2462.5, 749, 68.5, 12, "st Covina", "We"],
  [2565, 788, 73, 12, "Diamond Bar"],
  [2683, 803, 33, 12, "Chino"],
  [2613, 823.5, 59, 12, "Chino Hills"],
  [2557, 924, 66, 12, "Yorba Linda"],
  [2772.5, 939, 55.5, 12.8, "CORONA"],
  [2468, 943.5, 72.5, 12.8, "LERTON", "FUL"],
  [2489, 978, 60, 12.8, "NAHEIM", "A"],
  [2423, 1053, 71, 12, "er", "Westminst"],
  [2514, 1062.5, 72.5, 12.8, "SANTA ANA"],
  [2434.5, 1107, 86, 12, "tain Valley", "Foun"],
  [2405, 1125.5, 84, 12.8, "HUNTINGTON"],
  [2425, 1138.5, 43, 12.8, "BEACH"],
  [2562, 1125, 54, 16.4, "IRVINE"],
  [2822, 1048.5, 92, 12, "Temescal Valley"],
  [2090.5, 746, 66.5, 12, "", "Beverly Hills"],
  [2191.5, 765, 116, 17.5, "", "LOS ANGELES"],
  [2120, 858, 79, 13, "", "INGLEWOOD"],
  [2244, 869, 82, 13, "", "SOUTH GATE"],
  [2385, 741.5, 64, 13, "", "EL MONTE"],
  [2131.5, 895, 62, 12, "", "Hawthorne"],
  [2345.5, 906, 64.5, 13, "", "NORWALK"],
  [2236.5, 919.5, 52, 12, "", "Compton"],
  [2323, 962.5, 56, 12, "", "Lakewood"],
  [2135, 978, 68, 13, "", "TORRANCE"],
  [2215.5, 982, 53, 13, "", "CARSON"],
  [2238, 1045, 105, 17, "", "LONG BEACH"],
];

const TileText = styled.text`
  font-family: Montserrat, "Open Sans", sans-serif;
  font-weight: 600;
  fill: ${(p) => p.$tint || "#a0a9c0"};
`;

const AREAS = {
  northwest: "translate(1960 560) scale(0.33333)",
  southwest: "translate(1960 860) scale(0.33333)",
  northeast: "translate(2400 340) scale(0.33333)",
  southeast: "translate(2300 760) scale(0.34694 0.33333)",
};

function Zips({ area, shapes }) {
  return (
    <g transform={AREAS[area]} stroke="#f3fffa" strokeWidth="3" strokeLinejoin="round">
      {shapes.map(([fill, points], i) => (
        <polygon key={i} points={points} fill={fill} />
      ))}
    </g>
  );
}

function Roads({ area, main, minor }) {
  return (
    <g transform={AREAS[area]} fill="none" strokeLinejoin="round">
      {minor.map((d) => <path key={d} d={d} stroke="#eeeef0" strokeWidth="3" />)}
      {main.map((d) => <path key={d} d={d} stroke="#dfe0e5" strokeWidth="8" />)}
      {main.map((d) => <path key={`${d}-core`} d={d} stroke="#f6f6f7" strokeWidth="4" />)}
    </g>
  );
}

function HomePriceMap() {
  return (
    <svg width="1280" height="531" viewBox="1620 624 1280 531">
      <rect x="1620" y="624" width="1280" height="531" fill="#fafaf9" />
      <g transform={AREAS.northwest}>
        <path d="M-100,372 L135,372 170,420 215,545 262,600 200,640 180,670 110,645 0,630 -100,620Z" fill="#f0eff1" />
        <path d="M95,430 L130,450 160,500 210,545 180,590 120,580 90,520Z M190,315 L215,322 205,345 190,335Z M640,330 L700,300 705,400 650,395Z M330,230 H400 V270 H330Z" fill="#eeeeef" />
        <path d="M-300,630 L84,638 110,645 160,660 215,705 245,740 290,800 325,870 355,930 385,990 400,1040 440,1100 470,1180 488,1230 490,1280 480,1330 405,1415 420,1460 445,1525 490,1555 570,1555 640,1590 735,1648 800,1635 955,1572 1030,1568 1030,1495 1110,1515 1165,1555 1172,1522 1250,1570 1311,1641 1340,1665 1400,1720 1467,1790 L-1100,1790 -1100,630Z" fill="#d4d9dc" />
        <path d="M325,870 L395,900 425,990 405,1010 370,950Z" fill="#f3f3f4" />
      </g>
      <g transform={AREAS.southeast}>
        <path d="M1050,315 H1150 V430 L1180,470 1180,580 1130,580 1130,480 1050,450 1020,400 1050,390Z M1250,200 H1310 V250 H1250Z M880,340 L930,330 930,380 850,400Z M500,420 L700,400 700,590 560,590Z M640,650 H760 V740 L720,780 640,680Z M660,20 L720,25 720,70 680,70Z" fill="#f5f5f4" />
        <path d="M1205,315 L1245,335 1250,350 1285,395 1310,390 1330,380 1335,325 1345,365 1370,345 1420,335 1440,310 1482,312 1475,325 1430,345 1390,375 1372,395 1365,425 1395,440 1395,455 1345,450 1320,475 1260,478 1252,420 1245,395 1265,390 1240,350Z M1480,285 L1530,260 1568,228 1568,260 1540,285 1500,308Z M1063,785 L1085,790 1110,810 1138,818 1100,822 1080,832Z M865,730 L885,712 882,740 865,747Z M1010,615 L1018,620 1010,630Z M775,545 L790,553 780,562Z M1425,375 L1438,378 1430,388Z" fill="#d4d9dc" />
        <path d="M300,1030 L335,1030 345,1060 380,1100 430,1185 415,1185Z" fill="#e3e6e9" />
        <path d="M735,650 L745,625 810,600 870,575 M1030,1185 L1090,1150 M660,830 L610,1000 540,1185 M730,660 L710,760" stroke="#dcdfe8" strokeWidth="5" fill="none" />
      </g>
      <g transform={AREAS.northeast}>
        <path d="M550,960 L580,930 615,940 600,950Z M755,905 L820,890 850,865 900,860 840,905 780,915Z M420,1290 H455 V1310 H415Z M1070,1240 H1170 V1270 H1100Z M160,870 L178,875 170,900 160,890Z M1180,930 H1205 V945Z M1268,932 H1300 V946 H1268Z M1035,965 H1055 V985 H1030Z" fill="#f0f0f0" />
        <path d="M600,1155 L635,1150 630,1175 615,1175Z M740,1005 L752,1005 746,1020Z M910,985 L925,985 918,992Z M330,965 L352,955 348,975 335,980Z M1022,975 H1035 V980Z M695,950 L707,940 700,958Z" fill="#d9dce0" />
        <path d="M270,1022 L340,955 M350,942 L390,942 400,915 405,940 420,920 410,908 440,895 435,882 455,890 465,880 450,868 470,865 482,852" stroke="#d9dce0" strokeWidth="5" fill="none" />
        <path d="M190,1068 L220,1040" stroke="#d9dbde" strokeWidth="9" />
        <path d="M945,855 L925,950 880,1060 860,1160 810,1310 M1250,1315 H1340" stroke="#f3dcdc" strokeWidth="3.500" strokeDasharray="7 7" fill="none" />
      </g>
      <g transform={AREAS.southeast} stroke="#f3dada" strokeWidth="3.200" strokeDasharray="7 6" fill="none">
        <path d="M757,312 L930,312 1200,540 1410,840 1515,875 1520,1010 1575,1015" />
        <path d="M970,90 L970,140 930,145 885,240 910,245 912,300" />
        <path d="M1460,20 V190 L1340,238 1335,378 1235,380 1235,485" />
        <path d="M1075,0 L1060,60" />
      </g>
      <Roads area="northwest" main={ROADS.north} minor={STREETS.north} />
      <Roads area="northeast" main={ROADS.northeast} minor={STREETS.northeast} />
      <Roads area="southeast" main={ROADS.southeast} minor={STREETS.southeast} />
      <TileText x="1998" y="796" fontSize="13" textLength="97" $tint="#b3b5d4">
        SAN<tspan fillOpacity="0.35">TA MONICA</tspan>
      </TileText>

      <g transform={AREAS.northwest}>
        <path d={REGION} fill="#d0fde9" stroke="#f3fffa" strokeWidth="4" />
      </g>
      {Object.entries(BORDERS).map(([area, d]) => (
        <path key={area} transform={AREAS[area]} d={d} fill="none" stroke="#f3fffa" strokeWidth="3.500" />
      ))}
      <Zips area="northwest" shapes={NORTH} />
      <Zips area="southwest" shapes={SOUTH} />
      <Zips area="northeast" shapes={NORTHEAST} />
      <Zips area="southeast" shapes={SOUTHEAST} />
      <path d="M2436 876H2446L2441 884Z" fill="#b4b6bd" />

      {LABELS.map(([x, y, width, size, text, veiled]) => (
        <TileText key={`${x}-${y}`} x={x} y={y} fontSize={size} textLength={width}>
          {veiled ? <tspan fillOpacity="0.220">{veiled}</tspan> : null}
          {text}
        </TileText>
      ))}
    </svg>
  );
}

/* ---------- content ---------- */

const SALES = [
  ["90210", "$4,075,000", "-24.86%"],
  ["90402", "$4,048,750", "+24.58%"],
  ["90266", "$2,885,000", "+12.92%"],
  ["90077", "$2,515,000", "-10.18%"],
  ["91108", "$2,511,500", "+2.55%"],
  ["90212", "$2,380,000", "+62.74%"],
  ["90049", "$2,365,000", "+24.28%"],
  ["90274", "$2,319,500", "+23.87%"],
  ["90036", "$2,050,000", "+15.82%"],
  ["90254", "$2,027,500", "+11.55%"],
];

const SCALE = ["-25%", "-2%", "21%", "45%", "68%", "91%"];

function DesktopCard() {
  return (
    <Card $glow={0.25}>
      <CardHead>
        <CardTitle>Median home sale price change</CardTitle>
        <CardSubtitle>June 2020 to June 2021</CardSubtitle>
      </CardHead>
      <TabBar>
        <Tab $active>
          <MapThumb width={51} height={47} />
          Map
        </Tab>
        <Tab>
          <ListThumb width={90} height={47} />
          Trend List
        </Tab>
      </TabBar>
      <Legend>
        <LegendTitle>Median home price percent change</LegendTitle>
        <LegendBar>
          {[0, 1, 2, 3, 4].map((n) => <LegendStep key={n} $last={n === 4} />)}
        </LegendBar>
        <LegendScale>
          {SCALE.map((s) => <LegendMark key={s}>{s}</LegendMark>)}
        </LegendScale>
      </Legend>
      <MapFrame>
        <HomePriceMap />
        <Tooltip>
          <TooltipTitle>90638</TooltipTitle>
          <TooltipRow><TooltipKey>Median sales price</TooltipKey>$747,500</TooltipRow>
          <TooltipRow><TooltipKey>Percent change in price</TooltipKey>+18.75%</TooltipRow>
        </Tooltip>
        <Attribution>
          <MapLink>Leaflet</MapLink> | Map data © <MapLink>OpenStreetMap</MapLink>
        </Attribution>
      </MapFrame>
      <CardFoot>
        By
        <Logo width={83} height={9.5} back="#fff" ink={color.slate} />
      </CardFoot>
    </Card>
  );
}

function PhoneCard() {
  return (
    <Phone $glow={0.3}>
      <Screen>
        <PhoneTitle>Median home sale price change</PhoneTitle>
        <PhoneSubtitle>June 2020 to June 2021</PhoneSubtitle>
        <PhoneTabs>
          <PhoneTab>
            <MapThumb width={34} height={30} blue />
            Map
          </PhoneTab>
          <PhoneTab $active>
            <ListThumb width={58} height={30} />
            Trend List
          </PhoneTab>
        </PhoneTabs>
        <Table>
          <TableHead>
            <HeadCell $pad={18}>ZIP Code <SortIcon /></HeadCell>
            <HeadCell $pad={25}>Median Sales Price <SortIcon active /></HeadCell>
            <HeadCell $pad={6}>% Change <SortIcon /></HeadCell>
          </TableHead>
          <Rows>
            {SALES.map(([zip, price, change], i) => (
              <Row key={zip} $shade={i % 2 === 0}>
                <span>{zip}</span>
                <span>{price}</span>
                <span>{change}</span>
              </Row>
            ))}
          </Rows>
        </Table>
        <PhoneFoot>
          Source:
          <SourceLink>Redfin</SourceLink>
          <svg width="7" height="9" viewBox="0 0 6 8">
            <path d="M1 1L5 4 1 7" fill="none" stroke="#8b8e9a" />
          </svg>
          <Byline>
            By
            <Logo width={67} height={7} back="#fff" ink={color.slate} />
          </Byline>
        </PhoneFoot>
      </Screen>
    </Phone>
  );
}

export default function App() {
  return (
    <Page>
      <GlobalStyle />
      <Header>
        <Logo width={301} height={35} />
        <Nav>
          <NavLink>How it works</NavLink>
          <NavLink>Customers</NavLink>
          <NavLink>Company</NavLink>
          <NavLink>For Marketers</NavLink>
        </Nav>
        <Actions>
          <Button $solid $width={230}>Contact Us</Button>
          <Button $width={172}>Sign In</Button>
        </Actions>
      </Header>
      <Hero>
        <Copy>
          <Title>
            <TitleLine $track={-0.07}>Leverage the world’s</TitleLine>
            <TitleLine $track={-0.07}>data with interactive</TitleLine>
            <TitleLine $track={-0.07}>visualizations</TitleLine>
          </Title>
          <Lead>
            <LeadLine $track={-0.21}>Create, customize, and publish interactive data visualizations in less</LeadLine>
            <LeadLine $track={-0.42}>than 60 seconds—no coding experience required. We make sense of</LeadLine>
            <LeadLine $track={-0.6}>data so you don’t have to.</LeadLine>
          </Lead>
          <ButtonRow>
            <Button $solid $width={338}>Contact us to start</Button>
            <Button $width={316}>See how it works</Button>
          </ButtonRow>
        </Copy>
        <Showcase>
          <DesktopCard />
          <PhoneCard />
        </Showcase>
      </Hero>
    </Page>
  );
}
